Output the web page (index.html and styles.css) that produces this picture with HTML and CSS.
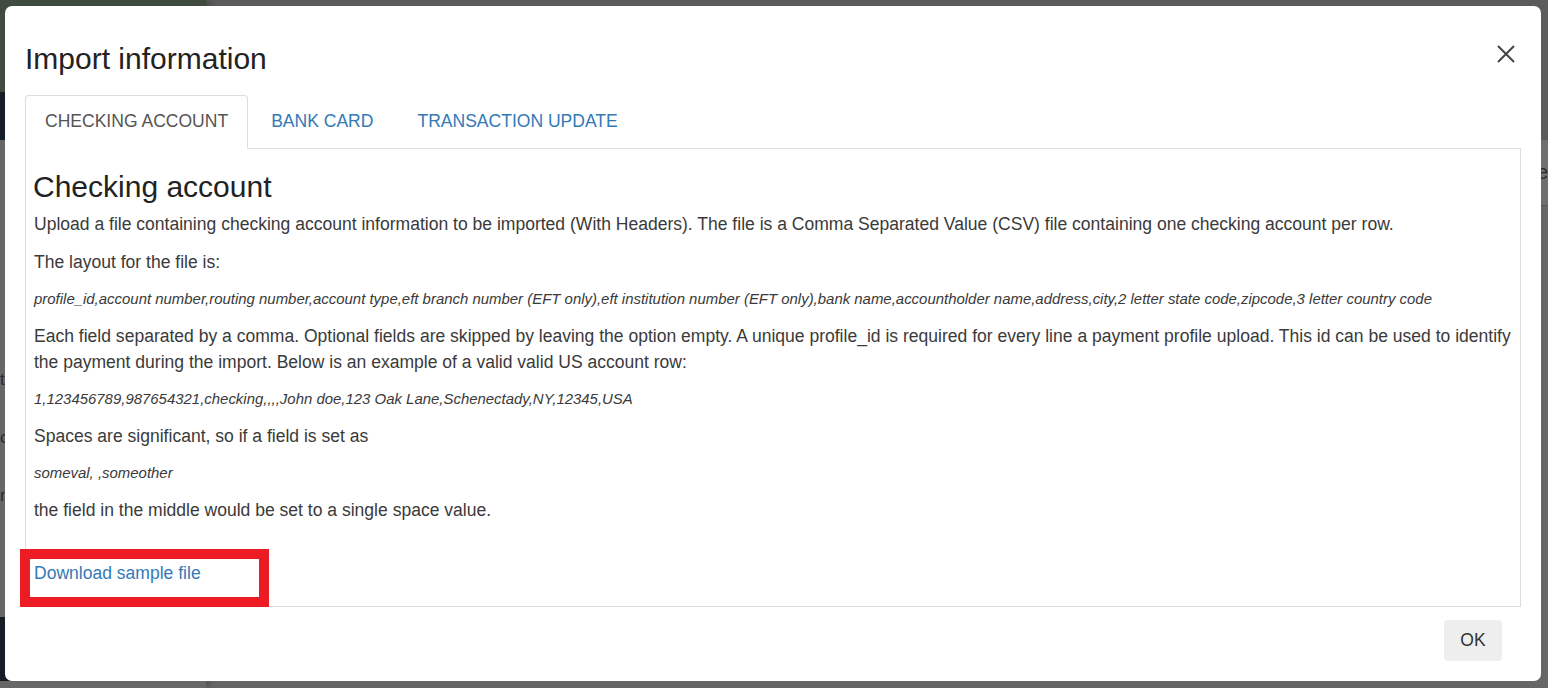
FILE: index.html
```html
<!DOCTYPE html>
<html lang="en">
<head>
<meta charset="utf-8">
<title>Import information</title>
<link rel="stylesheet" href="styles.css">
</head>
<body>
<div class="page">
  <aside class="sidebar">
    <div class="brand"></div>
    <div class="side-head"></div>
    <div class="side-menu">
      <div class="side-item">to</div>
      <div class="side-item">c</div>
      <div class="side-item">n</div>
    </div>
    <div class="side-foot"></div>
    <div class="side-end"></div>
  </aside>
  <main class="main">
    <div class="topbar"></div>
    <div class="toolbar"><span class="toolbar-label">e</span></div>
    <div class="content"></div>
  </main>
</div>

<div class="modal" role="dialog">
  <div class="modal-header">
    <h4 class="modal-title">Import information</h4>
    <button class="close" aria-label="Close">
      <svg width="18" height="18" viewBox="0 0 18 18"><path d="M1 1 L17 17 M17 1 L1 17" stroke="#444" stroke-width="2" fill="none"/></svg>
    </button>
  </div>
  <div class="modal-body">
    <ul class="nav-tabs">
      <li class="tab active"><a>CHECKING ACCOUNT</a></li>
      <li class="tab"><a>BANK CARD</a></li>
      <li class="tab"><a>TRANSACTION UPDATE</a></li>
    </ul>
    <div class="tab-pane">
      <h3 class="pane-title">Checking account</h3>
      <p>Upload a file containing checking account information to be imported (With Headers). The file is a Comma Separated Value (CSV) file containing one checking account per row.</p>
      <p>The layout for the file is:</p>
      <p class="code">profile_id,account number,routing number,account type,eft branch number (EFT only),eft institution number (EFT only),bank name,accountholder name,address,city,2 letter state code,zipcode,3 letter country code</p>
      <p>Each field separated by a comma. Optional fields are skipped by leaving the option empty. A unique profile_id is required for every line a payment profile upload. This id can be used to identify the payment during the import. Below is an example of a valid valid US account row:</p>
      <p class="code">1,123456789,987654321,checking,,,,John doe,123 Oak Lane,Schenectady,NY,12345,USA</p>
      <p>Spaces are significant, so if a field is set as</p>
      <p class="code">someval, ,someother</p>
      <p>the field in the middle would be set to a single space value.</p>
      <p class="download"><a class="link">Download sample file</a></p>
      <div class="highlight"></div>
    </div>
  </div>
  <div class="modal-footer">
    <button class="btn">OK</button>
  </div>
</div>
</body>
</html>
```
FILE: styles.css
```css
* { box-sizing: border-box; }
html, body {
  margin: 0;
  width: 1548px;
  height: 688px;
  overflow: hidden;
  font-family: "Liberation Sans", Arial, sans-serif;
}
.page {
  display: grid;
  grid-template-columns: 206px 1fr;
  height: 688px;
}
.sidebar {
  display: flex;
  flex-direction: column;
  box-shadow: 4px 0 6px rgba(0,0,0,0.2);
  z-index: 1;
}
.brand { height: 92px; background: #3e4b3e; }
.side-head { height: 48px; background: #141d25; }
.side-menu {
  flex: 1;
  background: #676767;
  display: flex;
  flex-direction: column;
  gap: 38px;
  padding: 230px 0 0 0;
  color: #2c2c2c;
  font-size: 17px;
}
.side-foot { height: 64px; background: #141d25; }
.side-end { height: 7px; background: #676767; }
.main { display: flex; flex-direction: column; }
.topbar { height: 140px; background: #5b5b5b; }
.toolbar {
  height: 66px;
  background: #6f6f6f;
  border-bottom: 1px solid #5a5a5a;
  display: flex;
  align-items: center;
  justify-content: flex-end;
  color: #2a2a2a;
  font-size: 20px;
}
.toolbar-label { margin-right: 0; }
.content { flex: 1; background: #666; }

/* modal */
.modal {
  position: fixed;
  left: 5px;
  top: 6px;
  width: 1536px;
  background: #fff;
  border-radius: 7px;
  z-index: 10;
  color: #3a3a3a;
}
.modal-header {
  display: flex;
  justify-content: space-between;
  align-items: flex-start;
  padding: 36px 20px 20px 20px;
}
.modal-title {
  margin: 0;
  font-size: 30px;
  font-weight: normal;
  line-height: 33px;
  color: #222;
}
.close {
  background: none;
  border: 0;
  padding: 0;
  margin: 3px 6px 0 0;
  width: 18px;
  height: 18px;
  cursor: pointer;
  display: flex;
}
.modal-body { padding: 0 20px; }
.nav-tabs {
  list-style: none;
  margin: 0;
  padding: 0;
  display: flex;
  border-bottom: 1px solid #ddd;
}
.tab {
  margin-bottom: -1px;
  margin-right: 2px;
}
.tab a {
  display: block;
  padding: 12px 20px 14px;
  line-height: 26px;
  font-size: 17.55px;
  color: #337ab7;
  border: 1px solid transparent;
  border-radius: 4px 4px 0 0;
}
.tab.active a {
  color: #555;
  background: #fff;
  border-color: #ddd #ddd transparent #ddd;
  padding-left: 19px;
  padding-right: 19px;
}
.tab-pane {
  position: relative;
  border: 1px solid #ddd;
  border-top: 0;
  padding: 8px 4px 8px 8px;
  font-size: 17.55px;
  line-height: 26px;
}
.pane-title {
  margin: 13px 0 8px -1px;
  font-size: 30px;
  font-weight: normal;
  line-height: 33px;
  color: #222;
}
.tab-pane p {
  margin: 0 0 12px;
}
.tab-pane p.code {
  font-style: italic;
  font-size: 14.95px;
  line-height: 24px;
}
.tab-pane p.download { margin-top: 37px; }
.link { color: #337ab7; text-decoration: none; }
.highlight {
  position: absolute;
  left: -6px;
  bottom: -1px;
  width: 249px;
  height: 58px;
  border: 10px solid #ed1c24;
}
.modal-footer {
  display: flex;
  justify-content: flex-end;
  padding: 13px 39px 20px 20px;
}
.btn {
  font-family: inherit;
  font-size: 17.55px;
  color: #333;
  background: #eee;
  border: 0;
  border-radius: 4px;
  width: 58px;
  height: 41px;
  padding: 0;
}
```
